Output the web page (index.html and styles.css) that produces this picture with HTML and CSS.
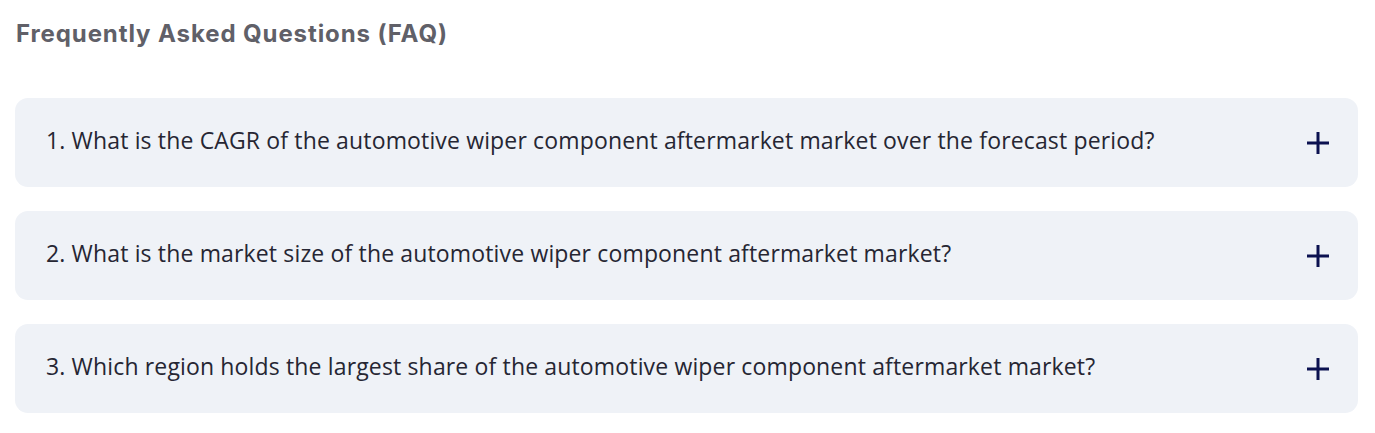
FILE: index.html
```html
<!DOCTYPE html>
<html lang="en">
<head>
  <meta charset="UTF-8">
  <title>FAQ</title>
  <link rel="stylesheet" href="styles.css">
</head>
<body>

<section class="faq">
  <h2 class="faq-title">Frequently Asked Questions (FAQ)</h2>

  <div class="faq-list">
    <div class="faq-item">
      <span class="faq-question">1. What is the CAGR of the automotive wiper component aftermarket market over the forecast period?</span>
      <svg class="faq-plus" width="22" height="22" viewBox="0 0 22 22"><path d="M11 0V22M0 11H22" stroke="#0b1150" stroke-width="3"/></svg>
    </div>
    <div class="faq-item">
      <span class="faq-question">2. What is the market size of the automotive wiper component aftermarket market?</span>
      <svg class="faq-plus" width="22" height="22" viewBox="0 0 22 22"><path d="M11 0V22M0 11H22" stroke="#0b1150" stroke-width="3"/></svg>
    </div>
    <div class="faq-item">
      <span class="faq-question">3. Which region holds the largest share of the automotive wiper component aftermarket market?</span>
      <svg class="faq-plus" width="22" height="22" viewBox="0 0 22 22"><path d="M11 0V22M0 11H22" stroke="#0b1150" stroke-width="3"/></svg>
    </div>
  </div>
</section>

</body>
</html>
```

FILE: styles.css
```css
body {
  margin: 0;
  background: #fff;
  font-family: 'Open Sans', sans-serif;
}
.faq {
  padding: 18px 17px 0 15px;
}
.faq-title {
  margin: 0 0 48px 1px;
  font-family: 'Inter', sans-serif;
  font-size: 24px;
  font-weight: 700;
  letter-spacing: 0.9px;
  color: #606068;
  line-height: 32px;
}
.faq-list {
  display: flex;
  flex-direction: column;
  gap: 24px;
}
.faq-item {
  display: flex;
  align-items: center;
  justify-content: space-between;
  height: 89px;
  padding: 0 29px 0 31px;
  background: #eff2f7;
  border-radius: 13px;
  box-sizing: border-box;
}
.faq-question {
  margin-bottom: 6px;
  font-size: 23px;
  letter-spacing: 0.15px;
  color: #262633;
}
.faq-plus {
  flex-shrink: 0;
}
```
